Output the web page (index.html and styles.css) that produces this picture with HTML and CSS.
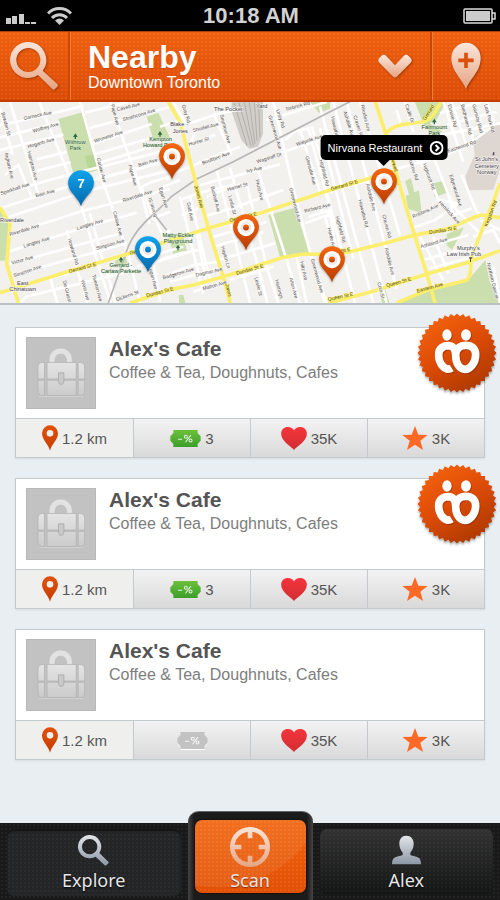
FILE: index.html
```html
<!DOCTYPE html>
<html lang="en">
<head>
  <meta charset="utf-8">
  <meta name="viewport" content="width=device-width, initial-scale=1">
  <title>Nearby</title>
  <link rel="stylesheet" href="styles.css">
</head>
<body>
  <!-- shared icons -->
  <svg class="sprite" width="0" height="0" aria-hidden="true">
    <defs>
      <linearGradient id="pale" x1="0" y1="0" x2="0" y2="1">
        <stop offset="0" stop-color="#fbe6db"/><stop offset="1" stop-color="#e5a482"/>
      </linearGradient>
      <linearGradient id="orange" x1="0" y1="0" x2="0" y2="1">
        <stop offset="0" stop-color="#f4670e"/><stop offset="1" stop-color="#b93c00"/>
      </linearGradient>
      <linearGradient id="rust" x1="0" y1="0" x2="0" y2="1">
        <stop offset="0" stop-color="#e2500a"/><stop offset="1" stop-color="#c43f00"/>
      </linearGradient>
      <linearGradient id="blue" x1="0" y1="0" x2="0" y2="1">
        <stop offset="0" stop-color="#10a3ec"/><stop offset="1" stop-color="#0469ad"/>
      </linearGradient>
      <linearGradient id="steel" x1="0" y1="0" x2="0" y2="1">
        <stop offset="0" stop-color="#e3e6ea"/><stop offset="1" stop-color="#8b96a5"/>
      </linearGradient>
      <linearGradient id="red" x1="0" y1="0" x2="0" y2="1">
        <stop offset="0" stop-color="#f5343b"/><stop offset="1" stop-color="#cf2e33"/>
      </linearGradient>
      <linearGradient id="green" x1="0" y1="0" x2="0" y2="1">
        <stop offset="0" stop-color="#6cc03a"/><stop offset="1" stop-color="#3c9e2c"/>
      </linearGradient>
      <linearGradient id="silver" x1="0" y1="0" x2="0" y2="1">
        <stop offset="0" stop-color="#e4e4e4"/><stop offset="1" stop-color="#cbcbcb"/>
      </linearGradient>
      <linearGradient id="seal-fill" x1="0.2" y1="0" x2="0.8" y2="1">
        <stop offset="0" stop-color="#f4640f"/><stop offset="0.45" stop-color="#df4c06"/><stop offset="1" stop-color="#a83700"/>
      </linearGradient>
      <clipPath id="seal-edge">
        <rect x="36" y="36" width="168" height="168"/>
        <rect x="36" y="36" width="168" height="168" transform="rotate(9 120 120)"/>
        <rect x="36" y="36" width="168" height="168" transform="rotate(18 120 120)"/>
        <rect x="36" y="36" width="168" height="168" transform="rotate(27 120 120)"/>
        <rect x="36" y="36" width="168" height="168" transform="rotate(36 120 120)"/>
        <rect x="36" y="36" width="168" height="168" transform="rotate(45 120 120)"/>
        <rect x="36" y="36" width="168" height="168" transform="rotate(54 120 120)"/>
        <rect x="36" y="36" width="168" height="168" transform="rotate(63 120 120)"/>
        <rect x="36" y="36" width="168" height="168" transform="rotate(72 120 120)"/>
        <rect x="36" y="36" width="168" height="168" transform="rotate(81 120 120)"/>
      </clipPath>
    </defs>
    <symbol id="i-pin" viewBox="0 0 48 76">
      <path fill="url(#rust)" fill-rule="evenodd" d="M24 76C18 54 0 44 0 24a24 24 0 0 1 48 0C48 44 30 54 24 76zM24 14a10 10 0 1 0 0 20 10 10 0 0 0 0-20z"/>
    </symbol>
    <symbol id="i-heart" viewBox="0 0 76 68">
      <path fill="url(#red)" d="M38 68C30 58 0 42 0 20 0 8 9 0 20 0c9 0 15 4 18 10C41 4 47 0 56 0c11 0 20 8 20 20 0 22-30 38-38 48z"/>
    </symbol>
    <symbol id="i-star" viewBox="0 0 76 72">
      <path fill="#fe6a25" d="M38 0l10 26 28 1-22 17 8 28-24-16-24 16 8-28L0 27l28-1z"/>
    </symbol>
    <symbol id="i-ticket" viewBox="0 0 92 50">
      <path d="M10 0h72v9l9 9v14l-9 9v9H10v-9l-9-9V18l9-9z"/>
      <g fill="none" stroke="#fff" stroke-width="3" opacity=".85">
        <path d="M24 27h12M62 15L46 36"/><circle cx="47" cy="20" r="4.500"/><circle cx="61" cy="31" r="4.500"/>
      </g>
    </symbol>
    <symbol id="i-target-pin" viewBox="0 0 80 112">
      <path d="M40 110C33 82 1 68 1 40a39 39 0 0 1 78 0c0 28-32 42-39 70z"/>
      <circle cx="40" cy="41" r="26" fill="#fff"/>
      <circle cx="40" cy="41" r="16" fill="#e6ded9"/>
      <circle cx="40" cy="41" r="14" fill="#f6f1ee"/>
      <circle cx="40" cy="41" r="9"/>
    </symbol>
    <symbol id="i-bag" viewBox="0 0 210 215">
      <g fill="url(#silver)" stroke="#aeaeae" stroke-width="2">
        <path stroke="#bdbdbd" fill="#e2e2e2" d="M68 76V66a36 36 0 0 1 72 0v10h-17q0-27-19-27T86 76z"/>
        <path d="M54 75v51H34V90q0-15 15-15zM54 130v47h-6q-14 0-14-15v-32z"/>
        <path d="M158 75v51h20V90q0-15-15-15zM158 130v47h6q14 0 14-15v-32z"/>
        <path d="M62 75h90v51H62zM62 130h90v47H62z"/>
        <path fill="#c9c9c9" stroke="#a2a2a2" d="M97 107h17v28l-4 7h-9l-4-7z"/>
      </g>
      <path d="M38 180h136" stroke="#dadada" stroke-width="2"/>
    </symbol>
    <symbol id="i-seal" viewBox="0 0 240 240">
      <rect width="240" height="240" fill="url(#seal-fill)" clip-path="url(#seal-edge)"/>
      <path fill="none" stroke="#7d2500" stroke-width="23" opacity=".5" transform="translate(3 3)" d="M104 165C84 178 65 150 65 126c0-23 16-28 31-28 15 1 20 14 20 28 0 29 14 43 28 43s32-18 32-44c0-20-14-28-29-28s-31 8-31 29"/>
      <path fill="none" stroke="#fff" stroke-width="23" d="M104 165C84 178 65 150 65 126c0-23 16-28 31-28 15 1 20 14 20 28 0 29 14 43 28 43s32-18 32-44c0-20-14-28-29-28s-31 8-31 29"/>
      <ellipse cx="93" cy="68" rx="14" ry="17" fill="#7d2500" opacity=".5"/>
      <ellipse cx="150" cy="68" rx="15" ry="17" fill="#7d2500" opacity=".5"/>
      <ellipse cx="90" cy="66" rx="14" ry="17" fill="#fff"/>
      <ellipse cx="147" cy="66" rx="15" ry="17" fill="#fff"/>
    </symbol>
  </svg>

  <div class="status-bar">
    <div class="signal">
      <svg width="30" height="12" viewBox="0 0 30 12" fill="#ccc" aria-hidden="true">
        <path d="M0 5h5v6H0zM6 3h5v8H6zM13 1h5v10h-5zM19 9h5v2h-5zM25 9h5v2h-5z"/>
      </svg>
      <svg width="25" height="19" viewBox="0 0 25 19" fill="none" stroke="#ccc" stroke-width="3" aria-hidden="true">
        <path d="M1 7.500a16 16 0 0 1 23 0M5 12a10.500 10.500 0 0 1 15 0"/><path fill="#ccc" stroke="none" d="M8 14.500q4.500-4 9 0L12.500 19z"/>
      </svg>
    </div>
    <span class="clock">10:18 AM</span>
    <svg class="battery" width="33" height="16" viewBox="0 0 33 16" aria-hidden="true">
      <rect x="1" y="1" width="28" height="14" rx="1" fill="none" stroke="#ddd" stroke-width="1.500"/>
      <rect x="3" y="3" width="24" height="10" fill="#ccc"/><path d="M29 5h3v6h-3" fill="none" stroke="#ddd" stroke-width="1.500"/>
    </svg>
  </div>

  <header class="header">
    <button class="header-button search-button" aria-label="Search">
      <svg width="48" height="48" viewBox="0 0 144 144" aria-hidden="true">
        <path fill="url(#pale)" fill-rule="evenodd" d="M55 0a54 54 0 1 0 29 99l43 42q4 3 8 0l7-7q3-4 0-8L98 86A54 54 0 0 0 55 0zm0 18a36 36 0 1 1 0 72 36 36 0 0 1 0-72z"/>
      </svg>
    </button>
    <div class="place">
      <h1>Nearby</h1>
      <p>Downtown Toronto</p>
    </div>
    <button class="header-button more-button" aria-label="Change area">
      <svg width="34" height="24" viewBox="0 0 102 72" aria-hidden="true">
        <path fill="url(#pale)" d="M51 34L25 6Q18-1 10 6L4 12q-6 7 0 14l40 41q7 7 14 0l40-41q6-7 0-14l-6-6q-8-7-15 0z"/>
      </svg>
    </button>
    <button class="header-button add-button" aria-label="Add place">
      <svg width="30" height="48" viewBox="0 0 90 144" aria-hidden="true">
        <path fill="url(#pale)" d="M45 142C36 112 1 90 1 48a44 46 0 0 1 88 0c0 42-35 64-44 94z"/>
        <path d="M45 32v46M22 55h46" stroke="#dd5009" stroke-width="11"/>
      </svg>
    </button>
  </header>

  <section class="map" aria-label="Map of places nearby">
    <svg class="map-drawing" viewBox="0 6 1500 603">
      <rect y="6" width="1500" height="603" fill="#f3f1ee"/>
      <g class="park">
        <path d="M175 57l78-22 45 175-76 18zM0 322l30 50-14 110H0zM440 50l35-12 35 75-50 6zM480 45l16 68-16 10zM805 345l80-22 44 138-89 11zM505 407l42-8 14 55-40 12zM344 482l33-12 6 20-34 12z"/>
        <path d="M930 6h60v20l-33 12zM1245 6h92l-28 54-20 10 38 25-28 14-30-40zM1215 243l18-8 10 42 14-6 8 68-40-12-8-40 10-3zM1300 250l30-8 16 34-42 16zM1340 402l52-20-36 68-16-14zM1190 609l110-40 100-24 56-65 12 60 32 69zM1138 573l18-4 12 40h-22zM536 586l14-2 6 25h-18z"/>
      </g>
      <path fill="#b9d696" d="M255 168l28-6 12 45-30 4z"/>
      <path fill="#ded7d1" d="M1500 68l-82 46 6 50-28 65 10 42 74-2 20-60z"/>
      <path fill="#d1cdc9" d="M695 6h94v96l-15 38-26 6-24-26-30-88z"/>
      <path class="yard" d="M703 10l38 128M717 8l36 130M733 8l27 130M748 8l17 124M763 8l8 114M776 8l4 104"/>

      <g class="street">
        <path d="M0 75l60-12 190-45M0 112l178-44M0 150l190-46M110 178l90-22M112 212l100-26M0 282l215-60 270-67M0 325l225-72 265-66M0 360l250-84 260-65M30 402l220-70 260-65M25 455l225-72 160-45M28 492l335-92M30 528l350-98M35 562l170-42M60 609l20-20 330-80"/>
        <path d="M255 38l130-32M268 84l240-62M275 132l180-60M285 162l170-48M292 190l185-56M300 235l180-50"/>
        <path d="M0 25l38 140M30 6l88 286M118 6l126 312 52 180 36 111M240 6l60 214 85 240 35 149M330 6l88 250 30 115M270 340l38 140M200 390l35 130 28 89M150 532l22 77M320 510l26 99M95 290l-40-95-40 30"/>
        <path d="M420 265l25-15 60-20M425 265l35 90 50-20M440 300l50 110 20-20M450 425l30 180M410 500l60-15 100-30M500 240l20-20 50-20M490 260l50-20M480 460l70-20"/>
        <path d="M480 80l60-20M520 6l40 70M570 70l88-30 60-12M560 140l85-36M570 200l90-38 60-22M600 255l240-62M620 290l80-32 20-4M540 300l60-22 100-24M545 345l50-20M610 350l100-30 140-50M650 380l170-50M640 410l160-44M640 440l150-44M655 480l170-50M480 480l60-20 60-10M500 525l80-30 80-10M510 545l150-42M580 575l90-25M690 540l130-40"/>
        <path d="M540 290l70 290M570 290l60 250M590 400l30 150M650 210l55 210 45 189M690 205l80 280 32 124M740 250l60 250 35 109M770 200l90 280 40 129M640 40l55 125M590 80l-20 60M820 6l60 260 50 190 50 153M855 120l30-25 40-10 65 240M900 90l60 185M935 80l60 200M838 160l150-50M800 60l70-20 110-34M925 350l70-20M915 370l60-22 20 80M890 470l30 139M930 460l45 149"/>
        <path d="M960 20l160 589M1000 6l160 603M1040 6l150 560M1080 6l120 400M960 85l100 390M960 200l105 408M960 330l30 10 20 120M970 350l20-5M960 165l80-22M1000 270l190-52"/>
        <path d="M1160 215l155-44 80-30 80-60M1300 170l60 150 80 80M1270 180l45 120 60 10-70 50-70 25M1190 30l15 50M1215 6l25 90M1330 6l60 180M1355 6l45 130M1385 6l35 110M1420 6l30 90M1460 6l25 70M1320 40l180-50M1340 75l150-40M1300 110l200-40"/>
        <path d="M1385 225l45 110 20 15M1345 285l15 60 55-20M1260 410l70 130M1300 410l45 110M1265 445l140-40M1270 480l150-42M1290 505l120-32M1440 360l60 30M1420 410l60-20 20 40M1480 500l20 109M1210 130l60 70"/>
      </g>
      <g class="rail">
        <path d="M325 609l60-170q20-50 80-100l50-50 75-52 110-52 290-150 60-30"/>
        <path d="M460 340l40 50"/>
      </g>
      <g class="main-road">
        <path d="M0 578l200-62 190-56 235-75 155-45 210-70 190-56M1155 104q15-22 50-30l60-8q28-4 44-36l14-24"/>
        <path d="M1126 6l34 104 40 150 45 150 35 110 25 89M390 609l120-40 70-14 90-25 180-58 60-10 80 1 60-8 110-27 80-22 105-20 80-35 20-6 70 10"/>
        <path d="M505 6l35 60 40 154 45 165 46 150 20 74M985 609l135-35 160-52 120-34 100-36M1190 609l90-38 120-30q15-12 12-62l30-79 40-100 18-50M0 322l30 50q-8 100-10 120l35 117"/>
      </g>

      <g class="label">
        <text transform="translate(72 60) rotate(-12)">Garnock Ave</text>
        <text transform="translate(100 98) rotate(-16)">Wolfrey Ave</text>
        <text transform="translate(85 145) rotate(-16)">Hogarth Ave</text>
        <text transform="translate(352 34) rotate(-14)">Cavell Ave</text>
        <text transform="translate(370 64) rotate(-17)">Strathcona Ave</text>
        <text transform="translate(284 128) rotate(-18)">Wroxeter Ave</text>
        <text transform="translate(3 285) rotate(-18)">Sparkhall Ave</text>
        <text transform="translate(108 292) rotate(-15)">Bain Ave</text>
        <text transform="translate(416 200) rotate(-16)">Bain Ave</text>
        <text transform="translate(30 408) rotate(-17)">Riverdale Ave</text>
        <text transform="translate(370 307) rotate(-18)">Riverdale Ave</text>
        <text transform="translate(72 443) rotate(-17)">Langley Ave</text>
        <text transform="translate(232 390) rotate(-17)">Langley Ave</text>
        <text transform="translate(36 494) rotate(-16)">Victor Ave</text>
        <text transform="translate(42 532) rotate(-19)">Simpson Ave</text>
        <text transform="translate(290 450) rotate(-16)">Simpson Ave</text>
        <text transform="translate(350 604) rotate(-20)">Dickens St</text>
        <text transform="translate(14 160) rotate(77)">Ingham Ave</text>
        <text transform="translate(4 38) rotate(75)">Bowden St</text>
        <text transform="translate(82 155) rotate(76)">Hampton Ave</text>
        <text transform="translate(290 175) rotate(75)">Carlaw Ave</text>
        <text transform="translate(339 335) rotate(75)">Carlaw Ave</text>
        <text transform="translate(385 196) rotate(75)">Pape Ave</text>
        <text transform="translate(332 14) rotate(75)">Pape Ave</text>
        <text transform="translate(203 417) rotate(73)">Howland Rd</text>
        <text transform="translate(188 543) rotate(75)">De Grassi</text>
        <text transform="translate(243 541) rotate(75)">West Ave</text>
        <text transform="translate(276 525) rotate(75)">Tiverton Ave</text>
        <text transform="translate(445 500) rotate(75)">Logan Ave</text>
        <text transform="translate(476 264) rotate(72)">Egan Ave</text>
        <text transform="translate(470 350) rotate(-105)">Boxtel St</text>
        <text transform="translate(545 16) rotate(72)">Gray Rd</text>
        <text transform="translate(580 96) rotate(-14)">Shudell Ave</text>
        <text transform="translate(567 138) rotate(-16)">Hunter St</text>
        <text transform="translate(608 194) rotate(-20)">Boultbee Ave</text>
        <text transform="translate(660 45) rotate(75)">Seymour Ave</text>
        <text transform="translate(740 218) rotate(-12)">Ivy Ave</text>
        <text transform="translate(772 190) rotate(-18)">Wagstaff Dr</text>
        <text transform="translate(683 274) rotate(-16)">Harriet St</text>
        <text transform="translate(560 308) rotate(78)">Gatt Ave</text>
        <text transform="translate(632 260) rotate(76)">Bushell Ave</text>
        <text transform="translate(685 288) rotate(76)">Leslie St</text>
        <text transform="translate(766 240) rotate(76)">Prust Ave</text>
        <text transform="translate(663 440) rotate(74)">Hayton Ln</text>
        <text transform="translate(763 533) rotate(75)">Leslie St</text>
        <text transform="translate(825 540) rotate(75)">Hastings</text>
        <text transform="translate(868 535) rotate(75)">Alton Ave</text>
        <text transform="translate(805 48) rotate(73)">Greenwood Ave</text>
        <text transform="translate(868 265) rotate(76)">Greenwood Ave</text>
        <text transform="translate(828 30) rotate(72)">Unity Rd</text>
        <text transform="translate(857 33) rotate(-15)">Torbrick Rd</text>
        <text transform="translate(890 138) rotate(-18)">Walpole Ave</text>
        <text transform="translate(916 170) rotate(75)">Glenside Ave</text>
        <text transform="translate(958 180) rotate(76)">Highfield Rd</text>
        <text transform="translate(914 338) rotate(-14)">Richard Ave</text>
        <text transform="translate(900 485) rotate(77)">Hiltz Ave</text>
        <text transform="translate(932 478) rotate(74)">Greenwood Ave</text>
        <text transform="translate(490 538) rotate(-16)">Badgerow Ave</text>
        <text transform="translate(588 530) rotate(-13)">Dagmar Ave</text>
        <text transform="translate(610 571) rotate(-16)">Malton Ave</text>
        <text transform="translate(992 50) rotate(76)">Hiawatha Rd</text>
        <text transform="translate(1030 35) rotate(73)">Ashdale Ave</text>
        <text transform="translate(1060 48) rotate(73)">Craven Rd</text>
        <text transform="translate(1082 16) rotate(76)">Rhodes Ave</text>
        <text transform="translate(1075 300) rotate(76)">Hiawatha Rd</text>
        <text transform="translate(1098 253) rotate(76)">Ashdale Ave</text>
        <text transform="translate(1147 345) rotate(76)">Craven Rd</text>
        <text transform="translate(1154 445) rotate(76)">Ashdale Ave</text>
        <text transform="translate(1006 350) rotate(74)">Highfield Rd</text>
        <text transform="translate(982 385) rotate(76)">Hertle Ave</text>
        <text transform="translate(1263 445) rotate(-16)">Ashland Ave</text>
        <text transform="translate(1240 355) rotate(-24)">Robbins Ave</text>
        <text transform="translate(1315 308) rotate(48)">Hemlock Ave</text>
        <text transform="translate(1268 192) rotate(70)">Highcroft Rd</text>
        <text transform="translate(1220 160) rotate(72)">Woodrow Rd</text>
        <text transform="translate(1348 225) rotate(73)">Edgewood Ave</text>
        <text transform="translate(1344 158) rotate(-18)">Eastwood Rd</text>
        <text transform="translate(1343 14) rotate(75)">Elmore Rd</text>
        <text transform="translate(1382 14) rotate(75)">Beldhaven Rd</text>
        <text transform="translate(1417 14) rotate(75)">Gainsby Blvd</text>
        <text transform="translate(1452 14) rotate(75)">Lark Park Rd</text>
        <text transform="translate(1215 14) rotate(72)">Cadle Dr</text>
        <text transform="translate(1460 490) rotate(76)">Northern Dancer</text>
        <text transform="translate(1132 548) rotate(75)">Coin St</text>
      </g>
      <g class="label road-label">
        <text transform="translate(208 519) rotate(-15)">Gerrard St E</text>
        <text transform="translate(390 464) rotate(-15)">Gerrard St E</text>
        <text transform="translate(690 366) rotate(-14)">Gerrard St E</text>
        <text transform="translate(994 272) rotate(-16)">Gerrard St E</text>
        <text transform="translate(440 592) rotate(-15)">Dundas St E</text>
        <text transform="translate(710 525) rotate(-16)">Dundas St E</text>
        <text transform="translate(970 470) rotate(-12)">Dundas St E</text>
        <text transform="translate(1288 402) rotate(-9)">Dundas St E</text>
        <text transform="translate(1160 562) rotate(-16)">Queen St E</text>
        <text transform="translate(985 603) rotate(-12)">Queen St E</text>
        <text transform="translate(1252 578) rotate(-15)">Eastern Ave</text>
        <text transform="translate(1462 380) rotate(-69)">Kingston Rd</text>
        <text transform="translate(1276 62) rotate(-58)">Gerrard</text>
        <text transform="translate(1170 165) rotate(75)">Coxwell</text>
        <text transform="translate(583 258) rotate(75)">Jones Ave</text>
        <text transform="translate(676 552) rotate(76)">Jones</text>
      </g>
      <g class="label area-label">
        <text x="36" y="367">Riverdale</text>
        <text x="68" y="554">East</text><text x="68" y="574">Chinatown</text>
        <text x="685" y="32">The Pocket</text>
        <text x="537" y="79">Blake -</text><text x="541" y="99">Jones</text>
        <text x="785" y="23">Yard</text>
        <text x="1460" y="184">St John's</text><text x="1460" y="203">Cemetery</text><text x="1460" y="222">Norway</text>
        <text x="1405" y="449">Murphy's</text><text x="1392" y="467">Law Irish Pub</text>
      </g>
      <g class="label park-label">
        <text x="226" y="133">Withrow</text><text x="226" y="151">Park</text>
        <text x="482" y="124">Kempton</text><text x="478" y="142">Howard Park</text>
        <text x="363" y="500">Gerrard -</text><text x="363" y="519">Carlaw Parkette</text>
        <text x="534" y="411">Matty Eckler</text><text x="534" y="429">Playground</text>
        <text x="1303" y="87">Fairmount</text><text x="1303" y="105">Park</text>
      </g>
      <path class="trees" d="M226 100l-7 11h5v6h4v-6h5zM480 93l-7 11h5v6h4v-6h5zM363 470l-7 11h5v6h4v-6h5zM534 434l-7 11h5v6h4v-6h5zM1303 56l-7 11h5v6h4v-6h5z"/>
      <path d="M1406 472h12l-5 6v8h-3v-8zM1480 156h3v10h-5v-4" fill="#554a5a"/>
    </svg>
    <button class="map-pin blue-pin pin-cluster" aria-label="7 places">
      <svg width="27" height="37" viewBox="0 0 80 112" aria-hidden="true"><path d="M40 110C33 82 1 68 1 40a39 39 0 0 1 78 0c0 28-32 42-39 70z"/></svg>
      <span>7</span>
    </button>
    <button class="map-pin blue-pin pin-carlaw" aria-label="Gerrard St and Carlaw Ave"><svg width="27" height="37" aria-hidden="true"><use href="#i-target-pin"/></svg></button>
    <button class="map-pin pin-jones" aria-label="Jones Ave"><svg width="27" height="37" aria-hidden="true"><use href="#i-target-pin"/></svg></button>
    <button class="map-pin pin-leslie" aria-label="Leslie St"><svg width="27" height="37" aria-hidden="true"><use href="#i-target-pin"/></svg></button>
    <button class="map-pin pin-dundas" aria-label="Dundas St E"><svg width="27" height="37" aria-hidden="true"><use href="#i-target-pin"/></svg></button>
    <button class="map-pin pin-nirvana" aria-label="Nirvana Restaurant"><svg width="27" height="37" aria-hidden="true"><use href="#i-target-pin"/></svg></button>
    <a class="tooltip" href="#nirvana">Nirvana Restaurant
      <svg width="14" height="14" viewBox="0 0 14 14" fill="none" stroke="#fff" stroke-width="2" aria-hidden="true"><circle cx="7" cy="7" r="6"/><path d="M6 4l3 3-3 3"/></svg>
    </a>
  </section>

  <main class="places">
    <article class="card">
      <div class="card-top">
        <svg class="thumb" width="70" height="72" aria-hidden="true"><use href="#i-bag"/></svg>
        <div>
          <h2>Alex's Cafe</h2>
          <p>Coffee &amp; Tea, Doughnuts, Cafes</p>
        </div>
      </div>
      <svg class="seal" width="80" height="80" aria-hidden="true"><use href="#i-seal"/></svg>
      <ul class="stats">
        <li><svg width="16" height="26" aria-hidden="true"><use href="#i-pin"/></svg>1.2 km</li>
        <li><svg class="ticket" width="31" height="17" aria-hidden="true"><use href="#i-ticket"/></svg>3</li>
        <li><svg width="26" height="23" aria-hidden="true"><use href="#i-heart"/></svg>35K</li>
        <li><svg width="26" height="24" aria-hidden="true"><use href="#i-star"/></svg>3K</li>
      </ul>
    </article>

    <article class="card">
      <div class="card-top">
        <svg class="thumb" width="70" height="72" aria-hidden="true"><use href="#i-bag"/></svg>
        <div>
          <h2>Alex's Cafe</h2>
          <p>Coffee &amp; Tea, Doughnuts, Cafes</p>
        </div>
      </div>
      <svg class="seal" width="80" height="80" aria-hidden="true"><use href="#i-seal"/></svg>
      <ul class="stats">
        <li><svg width="16" height="26" aria-hidden="true"><use href="#i-pin"/></svg>1.2 km</li>
        <li><svg class="ticket" width="31" height="17" aria-hidden="true"><use href="#i-ticket"/></svg>3</li>
        <li><svg width="26" height="23" aria-hidden="true"><use href="#i-heart"/></svg>35K</li>
        <li><svg width="26" height="24" aria-hidden="true"><use href="#i-star"/></svg>3K</li>
      </ul>
    </article>

    <article class="card">
      <div class="card-top">
        <svg class="thumb" width="70" height="72" aria-hidden="true"><use href="#i-bag"/></svg>
        <div>
          <h2>Alex's Cafe</h2>
          <p>Coffee &amp; Tea, Doughnuts, Cafes</p>
        </div>
      </div>
      <ul class="stats">
        <li><svg width="16" height="26" aria-hidden="true"><use href="#i-pin"/></svg>1.2 km</li>
        <li><svg class="ticket no-deal" width="31" height="17" aria-hidden="true"><use href="#i-ticket"/></svg></li>
        <li><svg width="26" height="23" aria-hidden="true"><use href="#i-heart"/></svg>35K</li>
        <li><svg width="26" height="24" aria-hidden="true"><use href="#i-star"/></svg>3K</li>
      </ul>
    </article>
  </main>

  <nav class="tabs">
    <a class="tab explore-tab" href="#explore">
      <svg width="31" height="31" viewBox="0 0 93 93" aria-hidden="true">
        <path fill="url(#steel)" fill-rule="evenodd" d="M35 0a35 35 0 1 0 18 65l27 26q2 2 5 0l6-6q2-3 0-5L64 54A35 35 0 0 0 35 0zm0 12a23 23 0 1 1 0 46 23 23 0 0 1 0-46z"/>
      </svg>
      Explore
    </a>
    <div class="scan-frame">
      <a class="tab scan-tab" href="#scan">
        <svg width="40" height="40" viewBox="0 0 120 120" aria-hidden="true">
          <path fill="url(#pale)" fill-rule="evenodd" d="M60 0a60 60 0 1 0 0 120A60 60 0 0 0 60 0zM53 14v20h14V14a47 47 0 0 1 39 39H86v14h20a47 47 0 0 1-39 39V86H53v20a47 47 0 0 1-39-39h20V53H14a47 47 0 0 1 39-39z"/>
        </svg>
        Scan
      </a>
    </div>
    <a class="tab alex-tab" href="#alex">
      <svg width="31" height="31" viewBox="0 0 93 93" aria-hidden="true">
        <path fill="url(#steel)" d="M46 2c14 0 22 10 22 24 0 12-5 20-10 27v7c8 4 22 4 27 10 4 5 5 11 5 18H3c0-7 1-13 5-18 5-6 19-6 27-10v-7c-5-7-10-15-10-27C25 12 32 2 46 2z"/>
      </svg>
      Alex
    </a>
  </nav>
</body>
</html>
```

FILE: styles.css
```css
* {
  box-sizing: border-box;
}

body {
  display: flex;
  flex-direction: column;
  min-height: 100vh;
  margin: 0;
  background: #e9eef2;
  font-family: "Liberation Sans", Arial, sans-serif;
}

h1, h2, p, ul {
  margin: 0;
  padding: 0;
}

button {
  padding: 0;
  border: 0;
  background: none;
  font-family: inherit;
  cursor: pointer;
}

a {
  text-decoration: none;
}

svg {
  display: block;
  flex: none;
}

/* status bar */
.status-bar {
  display: grid;
  grid-template-columns: 1fr auto 1fr;
  align-items: center;
  height: 31px;
  padding: 0 4px 0 6px;
  background: #000;
  color: #d2d2d2;
}

.signal {
  display: flex;
  align-items: flex-end;
  gap: 11px;
}

.clock {
  font-size: 22px;
  font-weight: bold;
}

.battery {
  justify-self: end;
}

/* orange header */
.header {
  display: flex;
  height: 71px;
  border-top: 1px solid #a84309;
  border-bottom: 2px solid #c23c04;
  background:
    radial-gradient(rgba(255, 255, 255, 0.07) 1px, transparent 1px) 0 0 / 4px 4px,
    linear-gradient(#f0600f, #db4b05);
}

.header-button {
  display: flex;
  align-items: center;
  justify-content: center;
  width: 70px;
}

.header-button svg {
  filter: drop-shadow(1px 1px 1px rgba(100, 30, 0, 0.5));
}

.search-button {
  border-right: 2px solid #cc4a08;
  box-shadow: 1px 0 0 #f47a33;
}

.add-button {
  border-left: 2px solid #c84707;
  box-shadow: inset 1px 0 0 #f47a33;
}

.place {
  flex: 1;
  padding: 7px 0 0 18px;
  color: #fff;
}

.place h1 {
  font-size: 32px;
  line-height: 36px;
  text-shadow: 0 1px 1px rgba(120, 40, 0, 0.3);
}

.place p {
  font-size: 16px;
  line-height: 16px;
}

/* map */
.map {
  position: relative;
  border-bottom: 2px solid #b9c2c5;
}

.map-drawing {
  width: 100%;
  height: auto;
}

.park {
  fill: #cadfad;
}

.street {
  fill: none;
  stroke: #fff;
  stroke-width: 8;
}

.rail {
  fill: none;
  stroke: #b9b7b5;
  stroke-width: 5;
}

.yard {
  fill: none;
  stroke: #b3afac;
  stroke-width: 3;
}

.main-road {
  fill: none;
  stroke: #fbee6c;
  stroke-width: 11;
  stroke-linejoin: round;
}

.label {
  fill: #56524f;
  stroke: #f8f7f5;
  stroke-width: 3;
  paint-order: stroke;
  font-size: 15px;
}

.road-label {
  fill: #4c4724;
  stroke: #fbee6c;
}

.area-label {
  fill: #45414a;
  font-size: 17px;
  text-anchor: middle;
}

.park-label {
  fill: #24583a;
  stroke: #dfe9cf;
  stroke-width: 2;
  font-size: 17px;
  text-anchor: middle;
}

.trees {
  fill: #2f6b3f;
}

.map-pin {
  position: absolute;
  transform: translate(-50%, -100%);
  fill: url(#orange);
  filter: drop-shadow(0 1px 1px rgba(0, 0, 0, 0.35));
}

.blue-pin {
  fill: url(#blue);
}

.pin-cluster span {
  position: absolute;
  top: 6px;
  left: 0;
  right: 0;
  color: #fff;
  font-size: 13px;
  font-weight: bold;
  line-height: 16px;
}

.pin-cluster {
  left: 16.2%;
  top: 52%;
}

.pin-carlaw {
  left: 29.6%;
  top: 85%;
}

.pin-jones {
  left: 34.4%;
  top: 39%;
}

.pin-leslie {
  left: 49.2%;
  top: 74%;
}

.pin-dundas {
  left: 66.4%;
  top: 90%;
}

.pin-nirvana {
  left: 76.8%;
  top: 51%;
}

.tooltip {
  position: absolute;
  left: 76.8%;
  top: 29%;
  display: flex;
  align-items: center;
  gap: 7px;
  height: 25px;
  padding: 0 4px 0 7px;
  border-radius: 5px;
  background: #000;
  color: #fff;
  font-size: 11px;
  white-space: nowrap;
  transform: translate(-50%, -100%);
}

.tooltip::after {
  content: "";
  position: absolute;
  top: 100%;
  left: 50%;
  border: 6px solid transparent;
  border-top-color: #000;
  border-bottom: 0;
  transform: translateX(-50%);
}

/* place cards */
.places {
  display: flex;
  flex-direction: column;
  gap: 20px;
  padding: 22px 15px;
}

.card {
  position: relative;
  border: 1px solid #c3cacd;
  background: #fff;
  box-shadow: 0 1px 2px rgba(0, 0, 0, 0.08);
}

.card-top {
  display: flex;
  gap: 13px;
  height: 90px;
  padding: 9px 10px;
}

.thumb {
  background: #c2c2c2;
  border: 1px solid #b8b8b8;
}

.card h2 {
  color: #545454;
  font-size: 21px;
  line-height: 24px;
}

.card p {
  color: #7d7d7d;
  font-size: 16px;
  line-height: 24px;
}

.seal {
  position: absolute;
  top: -15px;
  right: -13px;
  filter: drop-shadow(0 2px 1px rgba(0, 0, 0, 0.3));
}

.stats {
  display: grid;
  grid-template-columns: repeat(4, 1fr);
  border-top: 1px solid #c3cacd;
  list-style: none;
}

.stats li {
  display: flex;
  align-items: center;
  justify-content: center;
  gap: 4px;
  height: 38px;
  background: linear-gradient(#f3f3f3, #d9d9d9);
  color: #555;
  font-size: 15px;
}

.stats li + li {
  border-left: 1px solid #c3cacd;
}

.stats li:first-child {
  background: #efefed;
}

.ticket {
  fill: url(#green);
}

.no-deal {
  fill: #c2c2c2;
  filter: drop-shadow(0 1px 0 #fff);
}

/* bottom tabs */
.tabs {
  display: grid;
  grid-template-columns: 3fr 2fr 3fr;
  height: 77px;
  margin-top: auto;
  background:
    radial-gradient(rgba(255, 255, 255, 0.04) 1px, transparent 1px) 0 0 / 4px 4px,
    #191919;
}

.tab {
  display: flex;
  flex-direction: column;
  align-items: center;
  justify-content: flex-end;
  gap: 4px;
  border-radius: 7px;
  color: #e6e6e6;
  font-family: "Noto Sans", sans-serif;
  font-size: 18px;
  line-height: 20px;
  text-shadow: 0 1px 2px #000;
}

.explore-tab,
.alex-tab {
  margin: 6px 7px 5px;
  padding-bottom: 5px;
}

.explore-tab {
  background:
    radial-gradient(rgba(255, 255, 255, 0.03) 1px, transparent 1px) 0 0 / 4px 4px,
    #232526;
  box-shadow: inset 0 2px 2px #141414, 0 1px 0 #262626;
}

.alex-tab {
  background:
    radial-gradient(rgba(255, 255, 255, 0.03) 1px, transparent 1px) 0 0 / 4px 4px,
    linear-gradient(#323232, #141615);
}

.scan-frame {
  display: flex;
  margin-top: -12px;
  padding: 8px 7px 7px;
  border-top: 1px solid #666;
  border-radius: 11px 11px 0 0;
  background: linear-gradient(90deg, #454545, #1b1b1b 6px, #1b1b1b calc(100% - 6px), #454545);
}

.scan-tab {
  flex: 1;
  padding-bottom: 3px;
  gap: 3px;
  background:
    radial-gradient(rgba(255, 255, 255, 0.07) 1px, transparent 1px) 0 0 / 4px 4px,
    radial-gradient(circle at 20% -60%, rgba(255, 255, 255, 0.07) 75%, transparent 76%),
    linear-gradient(#f1640d, #e25004);
  box-shadow: 0 0 2px #000;
  text-shadow: 0 1px 1px #8b3000;
}
```
